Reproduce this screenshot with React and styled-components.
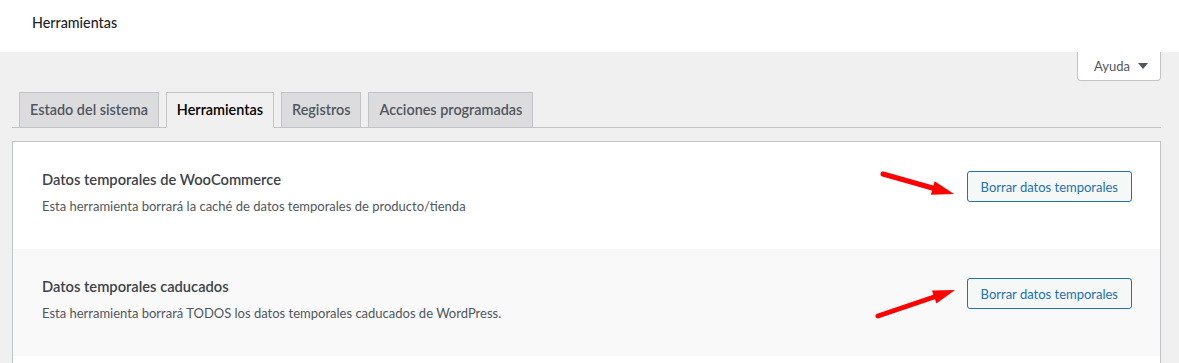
import styled, { createGlobalStyle } from 'styled-components';

const GlobalStyle = createGlobalStyle`
  body {
    margin: 0;
    background-color: #f0f0f1;
    font-family: Lato, "Liberation Sans", sans-serif;
    color: #3c434a;
  }
`;

const Header = styled.header`
  background-color: #ffffff;
  height: 52px;
  box-sizing: border-box;
  padding: 14px 32px 0 32px;
  font-size: 14.3px;
  line-height: 18px;
  font-weight: 500;
  color: #1d2327;
`;

const Wrap = styled.div`
  margin: 0 18px 0 12px;
`;

const HelpRow = styled.div`
  display: flex;
  justify-content: flex-end;
`;

const HelpButton = styled.button`
  display: flex;
  align-items: center;
  gap: 8px;
  height: 29px;
  box-sizing: border-box;
  padding: 0 12px 0 16px;
  background-color: #ffffff;
  border: 1px solid #c3c4c7;
  border-top: none;
  border-radius: 0 0 4px 4px;
  font-family: inherit;
  font-size: 13px;
  color: #50575e;
`;

const Caret = styled.span`
  width: 0;
  height: 0;
  border-left: 5px solid transparent;
  border-right: 5px solid transparent;
  border-top: 6px solid #50575e;
`;

const TabBar = styled.nav`
  display: flex;
  gap: 7px;
  margin-top: 11px;
  padding-left: 7px;
  border-bottom: 1px solid #c3c4c7;
`;

const Tab = styled.a`
  display: block;
  padding: 5px 10px;
  margin-bottom: -1px;
  font-size: 14.4px;
  line-height: 24px;
  font-weight: 600;
  border: 1px solid #c3c4c7;
  border-bottom-color: ${(p) => (p.$active ? '#f0f0f1' : '#c3c4c7')};
  background-color: ${(p) => (p.$active ? '#f0f0f1' : '#dcdcde')};
  color: ${(p) => (p.$active ? '#000000' : '#50575e')};
  text-decoration: none;
`;

const Panel = styled.section`
  margin-top: 13px;
  padding-bottom: 40px;
  background-color: #ffffff;
  border: 1px solid #c3c4c7;
`;

const ToolRow = styled.div`
  position: relative;
  display: flex;
  justify-content: space-between;
  align-items: flex-start;
  height: 107px;
  box-sizing: border-box;
  padding: 0 28px 0 29px;
  background-color: ${(p) => (p.$striped ? '#f9f9f9' : '#ffffff')};
`;

const ToolText = styled.div`
  padding-top: 27px;
`;

const ToolTitle = styled.div`
  font-size: 14.7px;
  line-height: 20px;
  font-weight: 600;
  color: #3c434a;
`;

const ToolDesc = styled.p`
  margin: 8px 0 0 0;
  font-size: 13px;
  line-height: 18px;
  color: #50575e;
`;

const ActionButton = styled.button`
  margin-top: 29px;
  height: 31px;
  padding: 0 13px;
  background-color: #f6f7f7;
  border: 1px solid #2271b1;
  border-radius: 3px;
  font-family: inherit;
  font-size: 13px;
  color: #2271b1;
`;

const Annotation = styled.svg`
  position: absolute;
  left: 847px;
  top: ${(p) => p.$top}px;
  overflow: visible;
`;

const tools = [
  {
    title: 'Datos temporales de WooCommerce',
    desc: 'Esta herramienta borrará la caché de datos temporales de producto/tienda',
    arrow: { top: 18, tail: [23, 14], shaftEnd: [76, 29], head: '94,34 74.7,21.3 70.9,34.7' },
  },
  {
    title: 'Datos temporales caducados',
    desc: 'Esta herramienta borrará TODOS los datos temporales caducados de WordPress.',
    arrow: { top: 26, tail: [18, 41], shaftEnd: [77, 21], head: '95,15 72,15.4 76.4,28.6' },
  },
];

function Arrow({ top, tail, shaftEnd, head }) {
  return (
    <Annotation $top={top} width="110" height="50" viewBox="0 0 110 50">
      <line
        x1={tail[0]}
        y1={tail[1]}
        x2={shaftEnd[0]}
        y2={shaftEnd[1]}
        stroke="#ff0000"
        strokeWidth="5"
        strokeLinecap="round"
      />
      <polygon points={head} fill="#ff0000" />
    </Annotation>
  );
}

export default function App() {
  return (
    <>
      <GlobalStyle />
      <Header>Herramientas</Header>
      <Wrap>
        <HelpRow>
          <HelpButton>
            Ayuda <Caret />
          </HelpButton>
        </HelpRow>
        <TabBar>
          <Tab>Estado del sistema</Tab>
          <Tab $active>Herramientas</Tab>
          <Tab>Registros</Tab>
          <Tab>Acciones programadas</Tab>
        </TabBar>
        <Panel>
          {tools.map((tool, i) => (
            <ToolRow key={tool.title} $striped={i % 2 === 1}>
              <ToolText>
                <ToolTitle>{tool.title}</ToolTitle>
                <ToolDesc>{tool.desc}</ToolDesc>
              </ToolText>
              <ActionButton>Borrar datos temporales</ActionButton>
              <Arrow {...tool.arrow} />
            </ToolRow>
          ))}
        </Panel>
      </Wrap>
    </>
  );
}
